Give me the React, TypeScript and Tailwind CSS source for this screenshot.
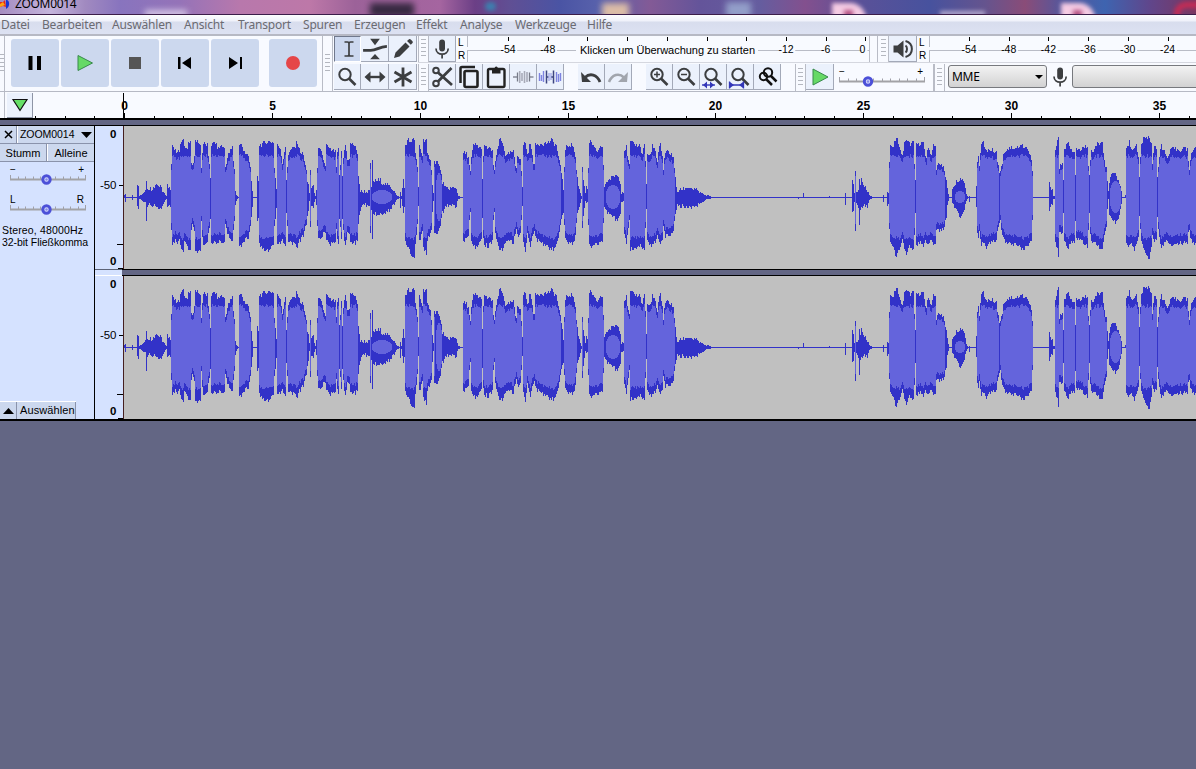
import React from "react";

const INK = "#3c3e40";

/* Envelope key points per section: x, top, bottom in thirds of a pixel, zero line at 216. */
const SECTIONS: { origin: number; points: string }[] = [
  {
    origin: 124,
    points:
      "0,210,217 3,208,228 5,216,217 22,216,217 24,210,222 26,216,217 37,215,217 39,184,246 41,214,217 44,186,243 47,213,218 54,208,224 60,202,228 65,198,232 67,174,281 69,198,236 80,192,238 92,188,238 102,180,248 112,188,246 118,200,236 125,210,222 128,214,218 131,179,250 134,188,240 138,190,248",
  },
  {
    origin: 160,
    points:
      "31,175,255 33,120,310 36,66,355 45,75,345 52,80,350 58,80,345 64,50,370 70,45,380 74,56,350 80,75,355 83,75,365 86,50,375 92,50,370 94,110,310 98,120,295 103,100,310 107,48,378 114,50,380 120,60,378 124,125,290 130,55,360 142,60,350 147,115,300 152,155,280 155,60,350 165,52,350 175,70,345 185,60,345 192,70,350 196,125,300 205,90,325 212,78,340 218,66,345 222,130,290 226,200,240 231,214,218 234,216,217 236,60,360 245,60,355 252,75,346 255,85,340 265,95,335 272,130,300 277,200,240 280,215,217 290,215,217 292,150,290 295,165,280 298,62,355 310,55,370 325,50,375 340,50,360 344,130,300 349,190,245 353,60,360 362,70,350 368,115,335 375,70,360 380,165,265 385,85,345 395,72,350 405,66,355 412,50,365 418,75,345 430,90,330 438,130,300 444,180,260 448,205,225 451,135,305 454,190,235 460,178,250 465,214,218 469,190,240 475,75,340 482,75,335 495,120,320 500,60,340 510,75,355 525,80,345 529,125,310 534,70,350 539,155,280 545,80,335 548,150,275 552,75,345 556,60,365 563,100,320 568,105,320 571,55,350 585,62,350 592,90,340 596,150,290 601,200,250 615,200,235 628,200,237 631,120,320 635,185,250 638,110,340 641,170,262 655,165,265 659,168,264",
  },
  {
    origin: 380,
    points:
      "0,165,265 10,175,262 20,178,260 30,185,250 42,195,235 50,210,221 58,215,217 61,195,245 65,214,218 70,165,255 74,190,240 77,60,350 84,45,360 90,50,380 103,42,392 107,85,350 112,130,300 115,185,240 119,62,345 127,90,320 131,45,370 139,42,382 143,90,340 150,110,325 155,130,310 159,200,230 163,110,325 172,110,320 180,130,300 188,170,260 195,190,240 210,190,240 230,190,240 234,214,218 247,215,217 250,85,345 258,85,335 265,95,330 271,140,250 275,100,340 280,60,355 290,60,365 300,68,350 304,75,345 307,155,280 312,65,355 325,70,360 337,75,345 342,140,260 348,95,340 355,60,355 361,42,375 370,60,365 378,95,345 388,85,345 400,80,350 408,130,310 413,88,330 422,100,325 427,185,245 431,60,350 436,52,372 443,90,320 450,55,365 456,85,330 462,120,315 467,60,335 480,55,350 500,55,360 515,46,372 530,62,360 538,110,320 548,160,265 551,190,265 556,70,340 565,60,350 580,62,350 586,95,330 592,160,260 599,195,240 605,214,218 608,125,305 612,180,250 617,205,225 621,190,235 624,130,290 628,60,355 635,50,360",
  },
  {
    origin: 560,
    points:
      "75,205,225 80,190,235 83,130,290 87,60,350 92,50,360 105,75,355 112,85,355 118,65,350 128,65,345 133,185,240 140,170,255 150,162,270 168,150,280 176,155,280 181,170,260 185,200,228 190,205,226 194,75,330 200,65,350 205,110,310 208,120,280 212,50,370 225,60,365 240,62,360 248,90,365 252,55,375 257,110,310 260,175,250 263,90,340 270,90,355 278,62,355 285,80,350 292,110,325 300,58,355 306,90,340 310,130,300 316,80,330 325,78,330 340,95,315 346,160,265 352,200,240 360,195,240 370,190,240 388,187,245 400,192,240 415,198,235 430,207,228 440,212,219 446,210,219 450,214,218 455,215,217 659,215,217",
  },
  {
    origin: 780,
    points:
      "0,215,217 52,215,217 55,215,220 58,215,217 68,215,217 70,205,217 73,215,217 145,215,217 148,213,217 151,215,217 194,215,217 196,200,238 199,215,217 214,215,217 217,170,260 220,180,255 224,205,228 227,138,315 230,200,235 235,195,240 238,165,295 241,180,250 245,160,245 252,185,240 262,195,240 270,212,219 276,215,217 308,215,217 310,210,228 313,215,217 320,215,217 322,198,235 326,200,230 328,110,310 331,62,355 340,65,360 350,35,398 358,60,365 368,95,345 373,50,370 380,45,380 390,60,360 400,50,370 403,110,320 406,165,265 410,60,355 420,60,350 430,52,362 438,95,345 445,70,360 455,95,340 460,60,355 467,60,355 470,130,310 475,118,315 490,125,310 498,160,280 503,190,240 507,215,217 514,215,217 518,195,235 530,170,255 540,162,272 550,165,265 556,190,240 561,213,218 566,215,217 568,213,227 571,215,217 586,215,217 588,185,240 590,120,300 595,90,340 599,115,310 604,60,355 610,55,355 617,72,358",
  },
  {
    origin: 986,
    points:
      "0,70,365 5,75,355 15,75,350 30,80,345 36,120,300 42,145,280 48,110,320 55,80,345 70,68,350 90,68,355 110,62,370 125,70,360 135,100,340 140,140,280 143,215,217 188,215,217 190,175,250 198,195,235 201,213,218 206,213,218 209,80,350 213,50,370 216,42,390 221,130,320 228,110,325 232,160,260 236,75,350 246,52,365 255,75,345 264,85,345 268,145,290 272,75,340 285,75,345 298,65,355 304,65,365 310,155,265 315,80,345 325,75,350 335,55,360 350,55,368 354,110,330 362,130,305 366,200,225 370,170,265 378,150,280 388,148,290 398,165,275 405,195,240 408,215,217 414,215,217 417,211,217 419,215,217 422,75,350 430,50,360 437,75,350 445,65,370 450,60,355 458,100,340 461,160,270 465,55,340 475,40,375 490,35,400 496,55,370 499,110,330 505,60,345 511,75,345 515,160,280 520,90,330 525,58,370 535,80,350 545,100,345 555,75,360 565,70,350 580,75,350 595,68,350 604,75,355 609,130,310 615,90,345 625,65,355 632,72,352",
  },
];

const noise = (n: number) => {
  const v = Math.sin(n * 12.9898) * 43758.5453;
  return v - Math.floor(v);
};

/* Quiet stretches that still carry an RMS core: from, to, height at the centre. */
const CORES: [number, number, number][] = [
  [371, 392, 7],
  [605, 620, 12],
  [954, 965, 6],
  [1109, 1121, 16],
  [435, 442, 24],
];

function buildEnvelope() {
  const pts: [number, number, number][] = [];
  SECTIONS.forEach(({ origin, points }) => {
    points.split(" ").forEach((p) => {
      const [x, t, b] = p.split(",").map(Number);
      pts.push([origin + x / 3, (216 - t) / 3, (b - 216) / 3]);
    });
  });
  pts.sort((a, b) => a[0] - b[0]);
  let peak = "";
  let rms = "";
  let i = 0;
  for (let x = 124; x < 1196; x++) {
    const c = x + 0.5;
    while (i < pts.length - 2 && pts[i + 1][0] < c) i++;
    const [x0, u0, d0] = pts[i];
    const [x1, u1, d1] = pts[i + 1];
    const f = Math.max(0, Math.min(1, (c - x0) / Math.max(0.01, x1 - x0)));
    let up = u0 + (u1 - u0) * f;
    let down = d0 + (d1 - d0) * f;
    const own = pts.find((p) => p[0] >= x && p[0] < x + 1);
    if (own) {
      up = own[1];
      down = own[2];
    }
    if (up > 5) {
      up += (noise(x) - 0.5) * 4.5;
      down += (noise(x + 700) - 0.5) * 4.5;
    }
    const u = Math.round(Math.max(0, up));
    const d = Math.round(Math.max(0.4, down));
    peak += `M${x} ${72 - u}h1v${u + d + 1}h-1z`;
    const core = CORES.find(([a, b]) => x >= a && x <= b);
    let iu = 0;
    let id = 0;
    if (core) {
      const t = (x - core[0]) / (core[1] - core[0]);
      iu = id = core[2] * Math.sqrt(Math.max(0, 1 - (2 * t - 1) ** 2));
    } else if (up > 24) {
      iu = Math.min(up * 0.86 - 1, 39 + noise(x + 90) * 4);
      id = Math.min(down * 0.86 - 1, 39 + noise(x + 190) * 4);
    }
    iu = Math.round(iu);
    id = Math.round(id);
    if (iu > 1) rms += `M${x} ${72 - iu}h1v${iu + id}h-1z`;
  }
  return { peak, rms };
}

const ENVELOPE = buildEnvelope();

function Channel() {
  return (
    <svg className="block shrink-0 bg-[#c0c0c0]" width="1072" height="143" viewBox="124 1 1072 143" shapeRendering="crispEdges">
      <path d={ENVELOPE.peak} fill="#3232c8" />
      <path d={ENVELOPE.rms} fill="#6464dc" />
    </svg>
  );
}

function Grip({ className = "" }: { className?: string }) {
  return (
    <div className={`flex shrink-0 items-center justify-center border-x border-[#b9bcc6] ${className}`}>
      <div className="h-[20px] w-[5px] bg-[repeating-linear-gradient(to_bottom,#b4b7bf_0,#b4b7bf_1px,transparent_1px,transparent_4px)]" />
    </div>
  );
}

function Tool({ children, active = false, className = "w-[27px]" }: { children: React.ReactNode; active?: boolean; className?: string }) {
  return (
    <div
      className={`flex h-[26px] shrink-0 items-center justify-center border-r border-b ${
        active ? "border-t border-l border-[#70788c] border-r-white border-b-white bg-[#ccd8ef]" : "border-[#a3a9b8] bg-[#ebf1fc]"
      } ${className}`}
    >
      {children}
    </div>
  );
}

function Icon({ children, size = 24 }: { children: React.ReactNode; size?: number }) {
  return (
    <svg width={size} height={size} viewBox="0 0 24 24" fill="none" stroke={INK} strokeWidth="2" className="shrink-0">
      {children}
    </svg>
  );
}

const Lens = ({ children }: { children?: React.ReactNode }) => (
  <Icon>
    <circle cx="10" cy="9.5" r="5.7" />
    <path d="M14 13.5l6.5 6.5" strokeWidth="2.6" />
    {children}
  </Icon>
);

const Mic = () => (
  <Icon>
    <rect x="9.2" y="2.5" width="5.8" height="12" rx="2.9" fill={INK} stroke="none" />
    <path d="M6 11.5c0 7.5 12.200 7.500 12.200 0M12.100 17v4.500" strokeWidth="1.7" />
  </Icon>
);

const menu: [string, string][] = [
  ["Datei", "w-[41px]"],
  ["Bearbeiten", "w-[70px]"],
  ["Auswählen", "w-[72px]"],
  ["Ansicht", "w-[54px]"],
  ["Transport", "w-[65px]"],
  ["Spuren", "w-[51px]"],
  ["Erzeugen", "w-[62px]"],
  ["Effekt", "w-[44px]"],
  ["Analyse", "w-[55px]"],
  ["Werkzeuge", "w-[72px]"],
  ["Hilfe", "w-[40px]"],
];

function MeterScale({ start, width, labels, prompt }: { start: number; width: number; labels: (string | null)[]; prompt?: string }) {
  const line = 14;
  return (
    <svg width={width} height="26" className="block shrink-0" fontFamily="Liberation Sans, Arial, sans-serif" fontSize="10.5">
      <path d={`M0.5 0v11M0.500 15v11M0 ${line + 0.5}H${width}`} stroke="#b9bcc6" />
      {labels.map((label, i) => {
        const x = start + i * 39.72;
        const lx = label === "0" ? x - 3 : x;
        const w = label ? (label === "0" ? 8 : label.length * 5.8 - 1) : 0;
        return (
          <g key={i}>
            <path d={`M${Math.round(x) + 0.5} 1v4`} stroke="#000" />
            {label && <rect x={lx - w / 2 + 3} y="12" width={w - 2} height="5" fill="#f8faff" />}
            {label && (
              <text x={lx} y="16.500" textAnchor="middle" fill="#000">
                {label}
              </text>
            )}
          </g>
        );
      })}
      {prompt && (
        <>
          <rect x="109" y="9" width="182" height="13" fill="#f8faff" />
          <text x="113" y="17.500" fill="#000" fontSize="11" textLength="175">
            {prompt}
          </text>
        </>
      )}
    </svg>
  );
}

function Slider({ left, right, knob, width, ticks }: { left: string; right: string; knob: number; width: number; ticks: number }) {
  const step = (width - 1) / ticks;
  return (
    <svg width={width + 4} height="24" className="block shrink-0" fontFamily="Liberation Sans, Arial, sans-serif" fontSize="10">
      <text x="1" y="9">{left === "-" ? "−" : left}</text>
      <text x={width - 1} y="9" textAnchor="end">{right}</text>
      {Array.from({ length: ticks + 1 }, (_, i) => (
        <path key={i} d={`M${Math.round(1 + i * step) + 0.5} ${i === 0 || i === ticks ? 11 : 12.500}V15`} stroke="#a0a0a8" />
      ))}
      <path d={`M1 15.500H${width + 1}`} stroke="#a2a2a6" strokeWidth="2" />
      <circle cx={knob} cy="15.500" r="3.700" fill="#d8dcfa" stroke="#4c50d8" strokeWidth="3" />
      <circle cx={knob} cy="15.500" r="1.200" fill="#8488e8" />
    </svg>
  );
}

function TransportButton({ children, className = "" }: { children: React.ReactNode; className?: string }) {
  return (
    <div className={`flex h-[48px] w-[48px] shrink-0 items-center justify-center rounded-[3px] bg-[#ccd8ee] ${className}`}>
      <svg width="24" height="24" viewBox="0 0 24 24">{children}</svg>
    </div>
  );
}

function Timeline() {
  const ticks = Array.from({ length: 40 }, (_, i) => i - 3);
  return (
    <svg width="1196" height="28" viewBox="0 92 1196 28" className="absolute inset-0" fontFamily="Liberation Sans, Arial, sans-serif" fontSize="12" fontWeight="bold">
      {ticks.map((t) => {
        const x = Math.round(124 + t * 29.57) + 0.5;
        const major = t % 5 === 0;
        return (
          <g key={t}>
            {x > 34 && <path d={`M${x} ${major ? 113 : 116}V119`} stroke="#000" />}
            {major && t >= 0 && (
              <text x={x} y="110" textAnchor="middle">
                {t}
              </text>
            )}
          </g>
        );
      })}
      <path d="M123.500 93V119" stroke="#000" />
    </svg>
  );
}

function VerticalRuler() {
  return (
    <svg width="28" height="143" className="block shrink-0 bg-[#d5e2ff]" fontFamily="Liberation Sans, Arial, sans-serif" fontSize="11.500">
      <text x="21.500" y="12" textAnchor="end" fontWeight="bold">0</text>
      <text x="21.500" y="63" textAnchor="end">-50</text>
      <text x="21.500" y="139" textAnchor="end" fontWeight="bold">0</text>
      <path d="M24 59.500h4M22 118.500h6M23 142.500h5" stroke="#000" />
    </svg>
  );
}

export default function App() {
  return (
    <div className="flex h-[769px] w-[1196px] flex-col overflow-hidden bg-[#636684] font-['Liberation_Sans',Arial,sans-serif] text-black">
      <div className="relative h-[15px] shrink-0 overflow-hidden border-b border-[#3b1d4a] bg-[linear-gradient(90deg,#a58cc0_0px,#c4b4dc_50px,#a18ac0_85px,#8874be_120px,#9573b8_180px,#b878ac_240px,#bd78a8_310px,#9c6299_355px,#a565a0_440px,#6b3f86_475px,#604f94_510px,#4a54a4_560px,#5962ac_600px,#835a96_650px,#64549a_700px,#655d9f_760px,#83508e_805px,#5a5198_860px,#47529e_930px,#65548e_985px,#8a4c78_1025px,#58569a_1060px,#3e64b0_1105px,#60468b_1150px,#793761_1196px)]">
        <div className="absolute top-[3px] left-[370px] h-[14px] w-[44px] bg-[#251f32] opacity-85 blur-[3px]" />
        <div className="absolute top-[10px] left-[145px] h-[8px] w-[42px] bg-[#d5c6e5] blur-[3px]" />
        <div className="absolute top-[2px] left-[485px] h-[9px] w-[11px] rounded-full bg-[#2d96bd] opacity-70 blur-[2px]" />
        <div className="absolute top-[3px] left-[602px] h-[16px] w-[27px] bg-[#dcbda7] blur-[3px]" />
        <div className="absolute top-[2px] left-[726px] h-[16px] w-[25px] bg-[#9fb0d4] opacity-80 blur-[3px]" />
        <div className="absolute top-[3px] left-[832px] h-[18px] w-[34px] rounded-tr-2xl bg-[#f5cbe3] blur-[2px]" />
        <div className="absolute top-[10px] left-[844px] h-[8px] w-[9px] bg-[#b45283] blur-[2px]" />
        <div className="absolute top-[11px] left-[940px] h-[5px] w-[45px] bg-[#b4a9ce] blur-[2px]" />
        <div className="absolute top-[3px] left-[1061px] h-[18px] w-[34px] rounded-tr-2xl bg-[#f5cbe3] blur-[2px]" />
        <div className="absolute top-[10px] left-[1073px] h-[8px] w-[9px] bg-[#b45283] blur-[2px]" />
        <div className="absolute top-[2px] left-[1174px] h-[24px] w-[36px] rounded-full border-[6px] border-[#c52c55] blur-[2px]" />
        <svg className="absolute top-0 left-0" width="12" height="12">
          <path d="M7 0c3 1 3 7-1 9V0z" fill="#1637d4" />
          <path d="M0 2h3l2-2 1 7-3-1-3 1z" fill="#e52818" />
          <path d="M0 4l3-2 2 3-5 2z" fill="#fba316" />
        </svg>
        <div className="absolute top-[-1px] left-[15px] font-['Noto_Sans','Open_Sans',sans-serif] text-[12px] leading-[10px] tracking-[-0.3px]">ZOOM0014</div>
      </div>

      <div className="flex h-[20px] shrink-0 items-start border-b border-[#b6b8c4] bg-[linear-gradient(#fdfdff_0,#eff1fa_6px,#d8dded_7px,#dce1f2_18px)] pl-[1px] font-['Noto_Sans','Open_Sans',sans-serif] text-[12px] leading-[20px] tracking-[-0.18px] text-[#6b6b72]">
        {menu.map(([label, width]) => (
          <div key={label} className={`shrink-0 whitespace-nowrap ${width}`}>
            {label}
          </div>
        ))}
      </div>

      <div className="flex h-[57px] shrink-0 border-y border-[#b6b9c4] bg-[#f8faff]">
        <Grip className="w-[5px] border-l-0" />
        <div className="flex w-[317px] shrink-0 items-start gap-[2px] pt-[3px] pl-[6px]">
          <TransportButton>
            <path d="M5.500 5h4v14h-4zM14 5h4v14h-4z" />
          </TransportButton>
          <TransportButton>
            <path d="M5 4.500v15l14.500-7.500z" fill="#66d966" stroke="#38894c" />
          </TransportButton>
          <TransportButton>
            <path d="M6 6h12v12H6z" fill="#555" />
          </TransportButton>
          <TransportButton>
            <path d="M5 6h2.500v12H5zM18 6v12l-9-6z" />
          </TransportButton>
          <TransportButton>
            <path d="M17 6h2v12h-2zM6 6v12l9-6z" />
          </TransportButton>
          <TransportButton className="ml-[8px]">
            <circle cx="12" cy="12" r="7" fill="#e54648" />
          </TransportButton>
        </div>
        <Grip className="w-[11px]" />

        <div className="flex w-[85px] shrink-0 flex-wrap content-start gap-y-[2px] pl-px">
          <Tool active className="w-[27px]">
            <Icon><path d="M8.500 5h3q1.500 0 1.500 1.500Q13 5 14.500 5h3M8.500 19h3q1.500 0 1.500-1.500 0 1.500 1.500 1.500h3M13 6v12" strokeWidth="1.700" /></Icon>
          </Tool>
          <Tool className="w-[28px]">
            <Icon size={26}><path d="M7.500 2.500h9L12 8.500zM7.500 21.500h9L12 16.500z" fill={INK} stroke="none" /><path d="M1 13.200h7c6 0 7-3.200 15-3.700" strokeWidth="2.600" /></Icon>
          </Tool>
          <Tool className="w-[28px]">
            <Icon><path d="M3 21l1.500-5.500L14.500 5.500l4 4L8.500 19.500zM16 4l2-1.800q1-.5 2 .5l1.500 1.500q.7 1 0 1.800L19.800 7.800z" fill={INK} stroke="none" /></Icon>
          </Tool>
          <Tool className="w-[27px]"><Lens /></Tool>
          <Tool className="w-[28px]">
            <Icon><path d="M5 12h14" strokeWidth="2.400" /><path d="M7.500 6.500v11L1.500 12zM16.500 6.500v11l6-5.500z" fill={INK} stroke="none" /></Icon>
          </Tool>
          <Tool className="w-[28px]">
            <Icon><path d="M12 2.500v19M3.500 7l17 10M20.500 7l-17 10" strokeWidth="2.800" /></Icon>
          </Tool>
        </div>

        <div className="flex w-[778px] shrink-0 flex-col">
          <div className="flex h-[27px] shrink-0 border-b border-[#d5d7df]">
            <Grip className="w-[11px]" />
            <Tool className="w-[27px]"><Mic /></Tool>
            <div className="flex w-[11px] shrink-0 flex-col justify-between pl-[2px] text-[10px] leading-[13px]"><span>L</span><span>R</span></div>
            <div className="flex w-[403px] shrink-0 border-r border-[#b9bcc6]">
              <MeterScale start={41} width={402} labels={["-54", "-48", null, null, null, null, null, "-12", "-6", "0"]} prompt="Klicken um Überwachung zu starten" />
            </div>
            <div className="w-[8px] shrink-0 border-r border-[#b9bcc6]" />
            <Grip className="w-[11px] border-l-0" />
            <Tool className="w-[28px]">
              <Icon>
                <path d="M2.500 8.500h4l6-5v17l-6-5h-4z" fill={INK} stroke="none" />
                <path d="M14.500 8.500c2 1.500 2 5.500 0 7" strokeWidth="2" />
                <path d="M14.500 4c8.500 2.500 8.500 13.500 0 16" strokeWidth="2" />
              </Icon>
            </Tool>
            <div className="flex w-[12px] shrink-0 flex-col justify-between pl-[2px] text-[10px] leading-[13px]"><span>L</span><span>R</span></div>
            <MeterScale start={40} width={267} labels={["-54", "-48", "-42", "-36", "-30", "-24"]} />
          </div>

          <div className="flex h-[28px] shrink-0 items-start pt-px">
            <Grip className="h-[27px] w-[11px]" />
            <Tool><Icon><circle cx="6" cy="5.500" r="2.800" /><circle cx="6" cy="18.500" r="2.800" /><path d="M8 7.500L22 20M8 16.500L21.500 3" strokeWidth="2.800" /></Icon></Tool>
            <Tool><Icon><rect x="7.500" y="6" width="13" height="16" rx="1.500" strokeWidth="2.600" stroke="#222" /><path d="M3.500 18V3.500Q3.500 2 5 2h13" strokeWidth="2.500" stroke="#222" /></Icon></Tool>
            <Tool><Icon><rect x="4" y="4" width="16.500" height="18" rx="1.500" strokeWidth="2.400" stroke="#222" /><path d="M8 4.500h2.500Q10.500 1.500 12.200 1.500T14 4.500h2.500v4H8z" fill="#222" stroke="none" /></Icon></Tool>
            <Tool>
              <Icon><g strokeWidth="1.300"><path d="M2 12h4M18.500 12h4" stroke="#888b98" /><path d="M6.500 7.500v9M18.500 7.500v9" stroke="#777b88" /><path d="M8.700 6v12M11 8v8M13.500 6v12M16 7v10" stroke="#a8abb8" strokeWidth="1.600" /></g></Icon>
            </Tool>
            <Tool>
              <Icon><path d="M1.500 8v8M3.500 10v6M5.500 6v11M18.500 7v10M20.500 9v8M22.500 8v8" stroke="#7d83df" strokeWidth="1.400" /><path d="M8.500 5.500v13M15.500 5.500v13M8 12h2.500M13 12h2.500" stroke="#3c4580" strokeWidth="1.500" /><path d="M11 8v8M13 8v7" stroke="#8b91df" strokeWidth="1" /></Icon>
            </Tool>
            <div className="w-[14px] shrink-0" />
            <Tool><Icon><path d="M6 12.500c5-5 12-3 15 4.500" strokeWidth="2.800" /><path d="M2 7l1 10h9z" fill={INK} stroke="none" /></Icon></Tool>
            <Tool><Icon><path d="M18 12.500c-5-5-12-3-15 4.500" strokeWidth="2.500" stroke="#a1a5ad" /><path d="M22 7l-1 10h-9z" fill="#a1a5ad" stroke="none" /></Icon></Tool>
            <div className="w-[14px] shrink-0" />
            <Tool><Lens><path d="M7 9.500h6M10 6.500v6" strokeWidth="1.500" /></Lens></Tool>
            <Tool><Lens><path d="M7 9.500h6" strokeWidth="1.500" /></Lens></Tool>
            <Tool><Lens><path d="M1 20h13" stroke="#3337b8" strokeWidth="1.400" /><path d="M6 16.500v7L2 20zM9 16.500v7l4-3.500z" fill="#3337b8" stroke="none" /></Lens></Tool>
            <Tool><Lens><path d="M1.500 16.500v7M15.500 16.500v7M2 20h13" stroke="#3337b8" strokeWidth="1.300" /><path d="M2 17v6l4-3zM15 17v6l-4-3z" fill="#3337b8" stroke="none" /></Lens></Tool>
            <Tool><Icon><circle cx="13" cy="7.500" r="4.200" stroke="#111" /><circle cx="8.500" cy="11.500" r="3.700" stroke="#111" /><path d="M15.500 10.500l6 6M11 14l6 6" strokeWidth="2.500" stroke="#111" /></Icon></Tool>
            <div className="w-[14px] shrink-0" />
            <Grip className="h-[27px] w-[11px]" />
            <Tool className="w-[28px]"><svg width="24" height="24"><path d="M5 4v16l15-8z" fill="#66d966" stroke="#38894c" /></svg></Tool>
            <div className="w-[99px] shrink-0 pt-[2px] pl-[4px]"><Slider left="-" right="+" width={86} knob={30} ticks={10} /></div>
            <Grip className="h-[27px] w-[12px] border-l-2" />
            <div className="mt-[1px] ml-[3px] flex h-[23px] w-[99px] shrink-0 items-center justify-between rounded-[3px] border border-[#77797e] bg-linear-to-b from-[#f3f3f3] to-[#d2d2d3] pr-[3px] pl-[3px] font-['Noto_Sans','Open_Sans',sans-serif] text-[12px] tracking-[-0.3px]">
              MME
              <svg width="8" height="4"><path d="M0 0h8L4 4z" /></svg>
            </div>
            <div className="flex h-[25px] w-[25px] shrink-0 items-center justify-center"><Mic /></div>
            <div className="mt-[1px] h-[23px] w-[140px] shrink-0 rounded-[3px] border border-[#77797e] bg-linear-to-b from-[#f3f3f3] to-[#d2d2d3]" />
          </div>
        </div>
      </div>

      <div className="relative flex h-[28px] shrink-0 border-b-2 border-black bg-[#f8faff]">
        <div className="w-[5px] shrink-0 border-r border-[#b9bcc6]" />
        <div className="mt-px ml-[2px] flex h-[25px] w-[26px] shrink-0 items-center justify-center border-r border-b border-[#8e95a6] bg-[#ebf1fc]">
          <svg width="18" height="14"><path d="M2 1.500h14L9 12.500z" fill="#66e066" stroke="#111" strokeWidth="1.200" /></svg>
        </div>
        <Timeline />
      </div>
      <div className="h-[6px] shrink-0 border-b border-black bg-[#636684]" />

      <div className="flex h-[295px] shrink-0 border-b-2 border-black">
        <div className="flex w-[95px] shrink-0 flex-col border-r border-black bg-[#d5e2ff]">
          <div className="flex h-[18px] shrink-0 border-b border-[#8a93ab] bg-[#ccd8ee]">
            <div className="flex w-[17px] items-center justify-center border-r border-[#8a93ab]">
              <svg width="9" height="9"><path d="M1 1l7 7M8 1L1 8" stroke="#000" strokeWidth="1.500" /></svg>
            </div>
            <div className="flex flex-1 items-center justify-between border-l border-white pr-[2px] pl-[2px] text-[10.5px] tracking-[-0.05px]">
              ZOOM0014
              <svg width="11" height="6"><path d="M0 0h11L5.500 6z" /></svg>
            </div>
          </div>
          <div className="flex h-[18px] shrink-0 border-b border-[#8a93ab] bg-[#ccd8ee] text-[11px] leading-[18px]">
            <div className="w-[47px] border-r border-[#8a93ab] text-center">Stumm</div>
            <div className="flex-1 border-l border-white text-center">Alleine</div>
          </div>
          <div className="h-[29px] shrink-0 pt-[2px] pl-[9px]"><Slider left="-" right="+" width={76} knob={37.500} ticks={10} /></div>
          <div className="h-[33px] shrink-0 pt-[3px] pl-[9px]"><Slider left="L" right="R" width={76} knob={37.500} ticks={10} /></div>
          <div className="shrink-0 pl-[2px] text-[10.5px] leading-[12px] whitespace-nowrap">
            <div className="tracking-[0.15px]">Stereo, 48000Hz</div>
            <div className="tracking-[-0.05px]">32-bit Fließkomma</div>
          </div>
          <div className="mt-auto flex h-[18px] w-[76px] shrink-0 border-t border-white bg-[#ccd8ee] text-[11px] leading-[17px]">
            <div className="flex w-[17px] items-center justify-center border-r border-[#8a93ab]">
              <svg width="11" height="6"><path d="M0 6h11L5.500 0z" /></svg>
            </div>
            <div className="w-[59px] border-r border-[#8a93ab] pl-[3px] tracking-[0.1px] whitespace-nowrap">Auswählen</div>
          </div>
        </div>

        <div className="flex w-[1101px] shrink-0 flex-col">
          <div className="flex h-[143px] shrink-0">
            <VerticalRuler />
            <div className="w-px shrink-0 bg-[#451f20]" />
            <Channel />
          </div>
          <div className="flex h-[7px] shrink-0">
            <div className="w-[27px] shrink-0 border-t border-[#5c6377] bg-[#d5e2ff]"><div className="mt-[5px] h-px bg-white" /></div>
            <div className="flex-1 border-y border-black bg-[#636684]" />
          </div>
          <div className="flex h-[143px] shrink-0 bg-[#c0c0c0]">
            <VerticalRuler />
            <div className="w-px shrink-0 bg-[#451f20]" />
            <Channel />
          </div>
        </div>
      </div>
    </div>
  );
}
